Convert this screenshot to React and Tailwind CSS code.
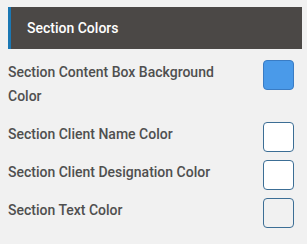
import React from "react";

const rows = [
    { label: "Section Content Box Background Color", swatch: "bg-[#4a9ae9] border-[#3a7cc4]", className: "mb-[14px]" },
    { label: "Section Client Name Color", swatch: "bg-white border-[#3c6e95]", className: "mb-2" },
    { label: "Section Client Designation Color", swatch: "bg-white border-[#3c6e95]", className: "mb-2" },
    { label: "Section Text Color", swatch: "bg-transparent border-[#3c6e95]", className: "" },
];

const App = () => {
    return (
        <div
            className="w-[307px] h-[244px] bg-[#f1f1f1] px-2 pt-[7px] overflow-hidden"
            style={{ fontFamily: "Roboto, 'Noto Sans', sans-serif" }}
        >
            <div className="h-[42px] w-[294px] bg-[#4b4846] border-l-[3px] border-[#1b78b4] flex items-center pl-4">
                <span className="text-white text-[14px] font-medium">Section Colors</span>
            </div>
            <div className="mt-[11px]">
                {rows.map((row) => (
                    <div key={row.label} className={`flex justify-between items-start ${row.className}`}>
                        <div className="w-[230px] text-[14px] leading-6 font-medium text-[#4f4f4f]">
                            {row.label}
                        </div>
                        <div className={`w-[31px] h-[30px] mr-[5px] rounded-[4px] border ${row.swatch}`} />
                    </div>
                ))}
            </div>
        </div>
    );
};

export default App;
